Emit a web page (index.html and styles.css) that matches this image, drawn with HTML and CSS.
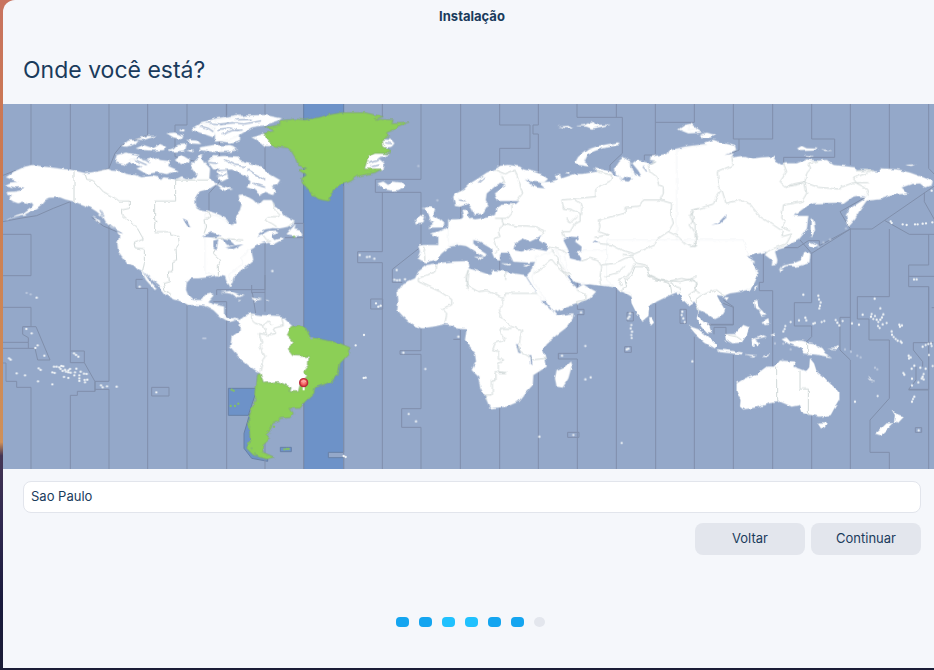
FILE: index.html
```html
<!DOCTYPE html>
<html lang="pt-BR">
<head>
<meta charset="utf-8">
<meta name="viewport" content="width=device-width, initial-scale=1">
<title>Instalação</title>
<link rel="stylesheet" href="styles.css">
</head>
<body>
<main class="window">
  <header class="titlebar">Instalação</header>
  <h1 class="heading">Onde você está?</h1>
  <svg class="map" viewBox="9 312 2814 1095" role="img" aria-label="Mapa de fusos horários">
    <defs>
      <filter id="coast" x="0" y="0" width="2900" height="1420" filterUnits="userSpaceOnUse">
        <feTurbulence type="fractalNoise" baseFrequency="0.05" numOctaves="2" seed="4" result="noise"/>
        <feDisplacementMap in="SourceGraphic" in2="noise" scale="11" xChannelSelector="R" yChannelSelector="G"/>
      </filter>
      <radialGradient id="pin" cx=".5" cy=".4" r=".6">
        <stop offset="0" stop-color="#ffaaa6"/><stop offset=".55" stop-color="#f46562"/><stop offset="1" stop-color="#c42630"/>
      </radialGradient>
    </defs>
    <rect class="sea" x="0" y="300" width="2830" height="1110"/>

    <!-- selected zone -->
    <g class="zone">
      <path d="M911,300H1031V1357H985V1373H1031V1420H911Z"/>
      <path d="M685,1165H772L745,1245V1246H685Z"/>
      <path d="M841,1342h33v13h-33z"/>
      <path d="M750,1240L732,1300V1345L755,1375L803,1384V1377L760,1350Z"/>
    </g>

    <!-- zone limits at sea -->
    <g class="limits">
      <g transform="translate(0 300)">
        <path d="M93,0V196M211,0V207M327,0V205L290,216M327,205L345,160L365,135L443,105V0M561,0V75H525V170L590,185L627,218V240M658,50V245L627,280V330M680,0V45M9,226L45,212M9,365L60,355L110,347L160,325L211,305V753H253V788L285,845V874H232V886H211V1120M9,403H93V527H9M327,365V844H285M327,868V1120M443,565V1120M561,610V1120M680,650V1120M408,538V565H443M408,538H428M275,352L310,378L350,395"/>
        <path d="M9,622H93V680M9,727H85V745M9,745H105L113,780H150L108,680H68V703L85,713V727M9,789H18V844H50V862H93V1120M211,753V788H253M285,868H327M455,862h52v26h-52zM285,844V874"/>
      </g>
      <g transform="translate(675 300)">
        <path d="M4,0V50M120,0V80M120,120V210M120,430V635M236,370V1120M356,258V1120M472,0V50M588,0V238H451V277H588V435M472,277V455H398V488H472V1120M582,445L502,508V547H532M205,370H236M180,413H236M120,860V1120"/>
      </g>
      <g transform="translate(1365 300)">
        <path d="M17,0V355M134,0V75H225V145H134V200M250,0V75H234V102H250V225M366,0V52H502V160L465,195V215M484,0V52M601,0V165H568V180M601,67H718V0M134,470V512"/>
      </g>
      <g transform="translate(2070 300)">
        <path d="M130,0V117H248V0M147,117V150L100,170M365,0V117H434V172H281V192M481,0V195M598,0V208M716,0V205L745,235M745,250L546,387H481L450,335L530,290M481,387L365,460V608H313V678H365V710L350,725M365,460L330,420M270,443H323L355,422H388V437L481,387V750M598,387V590H502V657H537V720H598V895L540,960V1057H598V1120M585,362L658,403H745M703,278V305L745,380M716,403V495H656V560H716V870H656M656,529H745M220,460V547H208V572H248V1120M716,560V1120M130,620V675H36M130,620L100,600M481,652H450V750L481,780V1120M365,900V1120M130,765V1120M725,623H745"/>
      </g>
      <g transform="translate(1170 750)">
        <path d="M93,235V302H30V313H93V476H35V532H93V690M211,240V690M190,268H212M329,472V690M445,365V690M562,95V178H582V194H562V310H505V327H562V690M533,547h34v15h-34zM679,115V690M711,187h19v26h-19zM704,290h20v17h-20z"/>
      </g>
      <g transform="translate(1860 720)">
        <path d="M107,190V690M223,290V690M180,208h19v42h-19zM282,283V262H318V290M240,253H340V202L310,190M886,563h19v14h-19zM880,308H940M880,308V330L908,365V380M888,380V420L866,448H926"/>
      </g>
      <g transform="translate(600 855)">
        <path d="M50,30V14H195V-30M195,22H157L167,85M80,50H40M80,50V110M512,42h36v30h-36zM155,0V25"/>
      </g>
    </g>

    <g filter="url(#coast)">
      <g class="land">
        <!-- North America, west -->
        <g transform="translate(0 300)">
          <path d="M18,232L42,215L75,200L100,195L130,200L175,205L222,212L255,219L290,215L325,207L335,212L365,215L380,222L405,225L425,232L455,228L475,232L483,240L490,232L515,235L530,240L545,232L558,238L575,238L590,225L570,198L605,163L605,178L630,205L628,235L640,245L650,252L630,265L600,273L590,285L583,300L585,318L600,328L622,332L640,338L660,345L680,358L690,375L705,380L740,390L760,480L700,530L697,553L690,553L680,530L665,522L640,528L620,532L595,535L570,535L560,545L558,570L565,587L580,600L605,600L615,585L637,580L640,590L625,607L640,613L672,620V645L680,653L695,655L705,662L690,665L678,660L660,650L640,630L615,617L590,615L565,615L545,605L520,598L500,585L475,555L445,530L428,512L445,538L470,565L465,570L438,540L425,515L415,510L400,495L380,490L370,475L355,455L352,430L358,410L352,395L368,402L360,392L335,383L320,370L310,352L290,335L270,322L250,315L222,305L195,298L180,292L150,293L135,300L125,312L110,325L75,343L45,350L20,360L50,345L75,338L92,325L100,315L95,308L85,312L70,305L55,310L40,305L30,298L35,288L22,282L20,276L45,275L60,272L70,262L45,262L15,255L30,248L55,245L35,238Z"/>
          <path d="M345,187L350,165L378,158L418,165L400,180L380,195ZM388,178L420,172L430,182L470,172L480,180L508,183L505,198L535,212L500,222L470,217L440,222L410,205L425,200L395,190ZM365,138L385,122L415,120L405,132L380,140ZM410,118L440,108L468,108L430,120ZM408,145L430,135L460,145L480,132L497,140L495,150L460,152L430,150ZM500,100L525,98L550,108L545,118L520,112ZM530,135L560,133L555,152L520,155L505,150L520,145ZM560,120L590,122L600,132L570,130ZM572,88L600,70L630,72L650,95L640,112L600,98ZM602,68L650,55L720,44V120L690,128L650,122L690,112L650,105L665,90L640,85ZM600,142L640,135L700,138L710,152L650,157L600,150ZM525,180L545,165L570,180L565,190L540,192ZM622,185L640,168L665,172L655,195L690,200L700,208L640,208ZM650,215L680,212L685,235L665,245L655,235ZM650,252L680,262L698,268L670,272ZM560,152L580,148L580,156ZM540,88L550,88L550,94L540,94ZM278,350L300,362L300,370Z"/>
        </g>
        <!-- Canada east -->
        <g transform="translate(675 300)">
          <path d="M-60,340L0,358L20,375L35,370L30,350L45,330L50,310L40,300L38,285L55,283L85,300L100,315L115,300L140,300L150,318L160,325L170,335L180,348L208,362L205,375L190,380L165,385L140,384L120,388L105,398L95,408L112,402L130,393L155,392L160,397L140,402L138,412L150,420L170,415L172,420L150,432L135,432L130,425L115,428L95,435L85,445L70,450L60,465L50,475L55,490L35,505L18,520L12,530L20,550L15,558L5,545L0,530L-60,520Z"/>
          <path d="M185,402L200,385L212,372L208,388L225,392L232,405L215,408ZM-30,60L0,55L60,47L120,45L170,55L160,62L120,75L80,82L60,95L35,110L10,120L-30,125ZM-45,185L-30,170L0,168L40,170L45,180L75,190L110,200L130,220L165,240L155,255L140,258L150,270L145,285L120,275L105,285L85,268L65,262L80,245L60,225L35,215L20,208L-20,210ZM-10,138L15,135L35,145L20,155L-10,155ZM117,100L147,138L120,138L108,128L80,112L105,105ZM415,210L422,172L445,157L490,163L460,175L478,190L475,208ZM470,118L500,120L508,130L500,140L472,144ZM458,250L475,245L490,255L500,245L530,248L540,258L520,270L500,272L480,268L470,262ZM600,325L615,318L630,330L625,345L640,355L658,370L655,382L610,383L625,370L612,360L615,350ZM570,360L585,345L600,350L595,370L572,373ZM740,350L690,362L670,380L655,388L640,395L615,400L640,410L640,435L600,435L580,437L585,455L578,475L590,482L605,488L635,478L650,460L675,440L705,435L740,440Z"/>
        </g>
        <!-- Europe and west Asia -->
        <g transform="translate(1365 300)">
          <path d="M0,318L-5,290L0,282L25,270L45,250L70,235L95,218L125,205L135,198L160,195L195,200L205,208L235,215L265,225L278,238L265,248L230,245L210,238L225,252L240,262L270,265L250,247L285,245L305,240L300,225L315,222L320,235L360,222L385,222L425,215L415,205L440,208L468,215L475,225L490,230L500,242L520,245L535,235L520,230L530,200L540,225L560,230L550,212L532,190L545,180L565,185L585,190L600,182L585,180L588,170L635,162L640,152L690,140L760,130V575L480,562L440,556L405,552L380,555L360,548L345,530L333,525L335,540L355,570V600H250L240,570L215,530L225,518L237,485L215,488L175,485L165,465L162,458L140,458L135,465L135,482L120,478L112,460L108,445L90,435L75,425L55,420L55,430L75,450L95,463L85,470L75,465L60,455L45,445L30,435L0,432L-20,438V358L20,358L25,350L20,330L40,330L38,352L60,358L100,352L120,345L125,325L140,315L180,312L190,303L130,303L120,280L155,255L140,248L125,255L95,280L92,300L100,315L85,340L60,345L50,325L40,310L15,320Z"/>
          <path d="M482,222L480,200L490,185L505,172L515,178L528,185L530,225L500,240ZM360,188L370,170L400,148L430,138L490,127L493,135L440,145L400,160L388,185L405,200L370,195ZM312,80L340,78L355,86L330,84ZM365,78L390,75L410,64L420,75L465,74L440,80L410,86L395,80ZM670,88L690,75L710,72L722,85L740,98L700,100ZM140,490L168,492L160,496ZM205,498L222,492L215,500ZM58,470L85,472L80,480ZM330,218L345,215L345,222Z"/>
        </g>
        <!-- east Asia -->
        <g transform="translate(2070 300)">
          <path d="M-40,150L0,140L50,135L45,128L70,120L95,128L135,138L138,150L105,165L130,160L125,172L165,168L190,175L215,172L250,170L258,185L275,195L285,190L320,190L350,178L385,182L410,180L430,195L495,202L500,212L525,210L565,215L570,205L620,208L660,218L700,232L728,243L725,255L705,262L690,250L665,252L635,262L652,280L610,285L570,298L530,302L510,330L495,355L475,378L468,345L480,325L520,300L530,290L500,288L490,290L460,312L440,308L370,310L345,322L310,348L355,348L350,390L325,420L285,440L265,445L255,455L262,480L260,495L242,497L245,480L225,465L230,455L200,462L170,470L195,485L185,490L205,515L195,545L180,570L-40,580Z"/>
          <path d="M0,72L20,85L-5,90ZM30,105L50,98L75,105L60,113L40,113ZM322,145L335,138L350,145L382,146L370,152L330,153ZM395,148L425,152L405,153ZM345,165L370,168L360,171ZM648,195L675,193L665,198ZM358,440L360,425L385,435L370,445ZM345,455L358,460L355,490L320,500L290,498L268,508L275,498L310,490L335,480ZM268,508L280,508L272,518ZM362,355L370,360L375,390L365,412L362,400Z"/>
        </g>
        <!-- Africa, Arabia, Iran -->
        <g transform="translate(1170 750)">
          <path d="M110,45L140,40L190,35L235,33L238,50L235,55L270,65L300,75L310,60L345,65L370,70L405,75L415,92L430,115L440,130L455,150L475,170L490,185L500,198L550,190L548,205L530,232L500,255L470,280L458,300L465,320L470,350L430,375L428,405L405,430L385,455L350,470L300,475L290,450L270,410L265,380L245,360L258,335L255,310L240,290L225,270L230,238L195,235L190,225L165,222L130,230L95,235L65,222L40,200L22,180L25,150L22,125L40,100L75,85L85,65Z"/>
          <path d="M425,82L430,95L450,125L470,155L492,185L560,162L600,145L618,125L590,110L580,103L560,115L548,105L530,80L525,60L500,0L440,20L435,45L430,70ZM535,75L555,98L585,100L620,105L660,105L690,115L705,130L740,150V0H520ZM495,385L500,360L525,350L540,335L545,350L535,385L518,413L500,410Z"/>
        </g>
        <!-- south Asia and Oceania -->
        <g transform="translate(1860 720)">
          <path d="M-40,120L-10,145L0,155L30,158L35,190L50,220L68,242L85,228L88,200L110,185L150,165L175,155L190,180L205,195L220,185L235,205L235,230L250,245L268,258L275,280L262,280L245,262L230,235L238,210L262,222L285,237L310,225L315,210L300,185L290,165L310,168L330,160L365,155L395,140L412,110L405,85L395,60L380,50L385,42L370,0H-40Z"/>
          <path d="M85,235L95,235L102,248L93,256L86,250ZM312,172L326,172L320,181ZM402,152L412,138L410,152ZM402,185L412,180L415,200L425,212L405,205ZM425,245L445,235L448,252L435,255ZM418,215L428,210L440,225L425,230ZM315,283L345,282L370,255L388,262L380,285L365,308L335,310L318,300ZM207,258L235,268L265,292L290,315L285,325L255,308L225,280ZM290,328L330,332L368,338L365,343L300,336ZM395,298L430,286L440,290L405,298L420,310L415,322L405,308L403,322L397,318ZM375,343L410,346L400,350ZM428,350L450,343L440,351ZM485,298L500,293L510,305L540,302L580,310L605,325L615,340L635,352L600,345L570,342L550,340L545,325L525,318L495,305ZM620,325L645,323L655,316L650,328ZM350,430L375,415L410,402L440,380L465,380L480,362L525,365L520,380L560,395L568,385L570,355L582,370L590,395L615,415L635,435L658,455L658,480L640,510L632,525L600,530L575,525L550,520L540,495L515,500L480,485L450,490L410,502L370,508L360,500L362,480L350,455ZM592,548L620,547L615,562L603,565ZM815,508L830,522L852,530L835,548L822,545L825,525ZM765,584L800,550L820,550L800,570L780,588ZM742,412L765,424L752,420ZM452,285L465,280L460,290Z"/>
        </g>
        <!-- South America and Caribbean -->
        <g transform="translate(600 855)">
          <path d="M70,95L90,103L105,98L118,105L135,92L150,85L180,90L245,93L275,122L300,150L278,170L300,200L335,215V240L318,260L335,275L310,300L295,325L270,320L275,308L235,290L190,295L180,265L150,245L120,220L90,185L95,155L118,140L120,118L105,103L90,110ZM63,22L90,18L130,33L110,36L95,26ZM152,38L185,43L165,48ZM112,45L124,46L115,49ZM198,45L208,46L200,48Z"/>
        </g>
      </g>

      <g class="chosen">
        <path transform="translate(675 300)" d="M117,100L150,92L120,82L165,75L165,62L210,57L240,60L280,52L310,45L350,38L420,38L475,50L450,57L505,60L500,68L552,66L515,80L505,90L485,98L490,110L472,120L475,140L495,150L492,160L450,160L430,170L418,207L470,207L450,218L400,228L375,245L335,258L325,275L315,285L310,303L280,297L262,283L245,262L232,250L230,235L245,225L220,210L245,205L218,195L212,175L200,155L185,143L143,138Z"/>
        <path transform="translate(600 855)" d="M272,125L300,120L318,130L330,155L375,165L420,175L450,188L448,205L420,235L415,265L395,290L345,308L342,325L315,350L300,370L270,370L280,385L270,398L240,400L235,410L218,415L212,435L198,450L208,462L190,480L185,500L222,516L200,522L160,510L140,490L150,460L145,400L165,345L172,270L180,265L190,295L235,290L272,307L270,320L295,320L300,300L322,275L308,262L325,240L327,215L278,212L265,195L278,170L262,152Z"/>
      </g>

      <!-- inland waters -->
      <g class="water">
        <path transform="translate(0 300)" d="M548,355L562,362L572,382L562,378ZM605,410L635,396L665,408L640,413ZM640,422L655,418L650,448L640,442ZM662,416L690,422L705,435L682,438ZM675,445L705,436L730,433L700,447Z"/>
        <path transform="translate(1365 300)" d="M175,450L180,430L205,415L225,425L260,408L250,420L280,440L275,453L230,445L200,455ZM325,420L345,410L375,412L360,425L380,440L378,455L360,458L378,470V483L345,475L340,450ZM413,428L420,420L430,430ZM768,375L790,368L815,342L812,355L795,370Z"/>
        <path transform="translate(1170 750)" d="M378,282L383,282L393,310L385,308ZM418,318H424L427,346L420,342Z"/>
        <path transform="translate(600 855)" d="M325,158L345,155L335,164Z"/>
      </g>
      <!-- channels and fjords -->
      <g class="channels">
        <path transform="translate(0 300)" d="M600,78L625,85L640,95M620,68L660,72L700,68M655,88L690,84L715,92M405,180L440,195M430,176L450,188M610,186L650,190M648,230L680,222M300,330L312,350M330,375L362,398"/>
        <path transform="translate(675 300)" d="M-15,75L20,68L60,72L110,62M-10,105L20,92L50,90M30,60L80,58M0,180L30,195L60,200M70,210L95,225L120,240M85,250L120,262M430,190L455,182L470,170M440,200L460,195M480,128L500,132"/>
        <path transform="translate(1365 300)" d="M565,200L575,215M90,230L70,248M12,300L30,302"/>
      </g>

      <!-- zone limits on land -->
      <g class="borders">
        <path transform="translate(0 300)" d="M222,212V305M255,219L260,238L280,242L310,275L350,297L357,303H388V325L365,330V342L390,365L412,385L430,417L402,430L405,443L433,447V490L428,515M627,240H527V303H464V360L472,365L464,370V395H512V405L535,410L538,430L528,445L530,480L518,485V515H505L508,545L490,550L495,570L512,585M622,332L630,350L615,360L620,380L612,400M645,445L640,460L662,480L655,495V525M640,413L730,420"/>
        <path transform="translate(675 300)" d="M145,308L150,330L165,345L160,350H125L120,360L140,370L155,380M188,380L210,362M112,402L125,420L135,420M600,440L597,455L600,480"/>
        <path transform="translate(1365 300)" d="M120,210L150,222L180,210L190,240L203,280L185,303M140,225L150,250M170,312L172,335L155,355H120M140,355L145,370L185,378H215L240,380L270,392L260,408M145,370L130,395L135,410L118,415L128,450L118,460M425,215L470,225L468,240L422,265V290L370,295L320,300L325,325L345,328L375,340V365L360,370L345,395L322,395L330,415M360,298L380,312V345M335,355L345,370L365,350M600,182L580,195L585,215L605,230L612,255L625,260V280L615,300H565L555,318L510,322V340L430,360L435,380L430,395L460,405L418,412M615,300L650,310L648,340L655,370L640,395L610,415L600,435L565,450L530,465L500,463M430,430L470,435L500,450L535,460M730,325L710,330L715,360L705,375L725,405L720,440L690,430L670,410L640,395M280,440L320,450L335,460M290,450L310,475L305,495M237,520L265,500L290,478L315,510L350,525M380,483L405,475L430,483L440,500L435,530L440,555M440,495L480,490L510,475L535,470M530,470L545,490L575,495L580,520M540,490L530,510L515,530L490,540L500,560M445,530L490,518L510,495M580,525L610,540L640,545L680,535L700,540L725,530M40,510L32,530L40,570"/>
        <path transform="translate(2070 300)" d="M125,172L130,195L82,215L85,260L95,268L108,310L150,300L180,312L210,350L250,375L280,395L275,410L305,402L290,430L240,450L225,462M95,268L80,290L70,312L45,320L15,330L0,350L15,375V405L20,438L0,440M281,192L290,215L270,245L288,262L310,252L345,245L350,220L362,205L355,190L385,182M288,262L345,248L385,262L440,267L490,248H535M345,250L350,280L335,305L280,315L275,355L285,365L275,380L300,390M500,212H550L515,225L490,235L500,250L530,265L535,290M0,540L20,545L15,570L30,580"/>
        <path transform="translate(1170 750)" d="M140,42L138,65L85,85V95L150,125L185,148V165L155,175L170,190L165,220M235,60L228,105L265,125L290,122L340,142V165L325,180L335,205L365,230L395,240L390,270L385,300L420,322L425,330L467,325M347,65V90M440,130H345V140M365,235H330L335,255L345,270L315,280L308,300L325,305V328H340V335L325,340V365L348,368H315V392H307V435H285L290,450M500,25L530,80M562,165L560,155L585,150V130L560,120"/>
        <path transform="translate(1860 720)" d="M0,155L20,140L15,120L35,105L45,80H75L88,105L125,122H155L180,125L215,115L232,130L228,150L205,165L215,185M88,105L95,115L150,130L155,160M155,125L165,140L185,145L180,158M245,165L290,150L310,165M245,165L225,180L235,210M470,380V487M540,392V447H565V525M563,305V342M325,285L350,290L365,300"/>
        <path transform="translate(600 855)" d="M155,85V105L165,115L190,120L200,150L178,145L185,175L180,185L195,215L188,225L180,260M205,150L230,145L222,130L250,122L245,95M190,120L205,108L215,120"/>
      </g>
    </g>

    <!-- small islands -->
    <g class="isles">
      <path transform="translate(0 855)" d="M110,38h0M79,132h0M95,145h0M113,181h0M106,189h0M133,212h0M27,220h0M32,224h0M222,205h0M228,210h0M235,215h0M50,265h0M75,271h0M116,250h0M122,255h0M114,289h0M157,298h0M157,262h0M164,264h0M162,245h0M170,245h0M178,247h0M184,243h0M190,244h0M182,252h0M188,258h0M195,254h0M198,260h0M205,256h0M210,252h0M212,263h0M205,262h0M192,276h0M205,279h0M223,271h0M225,262h0M229,251h0M242,260h0M252,266h0M260,267h0M238,271h0M238,280h0M238,288h0M254,285h0M262,284h0M255,292h0M303,301h0M308,307h0M321,304h0M350,305h0M469,322h0M419,5h0"/>
      <path transform="translate(675 300)" d="M142,513h0M404,465h0M426,471h0M434,470h0M448,476h0M515,510h0M508,539h0M516,541h0M524,540h0M540,538h0"/>
      <path transform="translate(600 855)" d="M492,150h0M467,181h0M491,279h0M497,278h0M528,55h0M535,65h0M542,62h0M431,513h0M437,516h0M92,2h0"/>
      <path transform="translate(1170 750)" d="M40,308h0M106,357h0M56,492h0M78,514h0M205,260h0M448,560h0M550,555h0M516,317h0M586,288h0M586,388h0M602,382h0M573,187h0M695,579h0M720,190h0M718,200h0M714,205h0M724,225h0M722,235h0M726,245h0M724,255h0M725,264h0M715,296h0M710,298h0"/>
      <path transform="translate(1860 720)" d="M187,215h0M185,225h0M190,235h0M194,246h0M217,364h0M550,164h0M595,167h0M597,178h0M602,187h0M600,197h0M598,205h0M512,246h0M537,241h0M556,233h0M559,241h0M496,258h0M494,267h0M490,274h0M580,251h0M585,249h0M605,246h0M613,243h0M647,240h0M652,248h0M658,256h0M668,243h0M696,250h0M717,254h0M764,176h0M781,205h0M728,224h0M755,222h0M753,230h0M765,228h0M760,237h0M770,239h0M790,223h0M786,232h0M781,239h0M775,246h0M788,253h0M800,249h0M774,258h0M779,264h0M838,254h0M846,256h0M840,260h0M815,274h0M816,284h0M821,291h0M827,297h0M833,302h0M842,304h0M845,308h0M908,320h0M917,315h0M925,312h0M933,310h0M935,318h0M927,345h0M866,347h0M872,352h0M867,355h0M938,378h0M883,377h0M875,386h0M901,383h0M917,386h0M850,399h0M853,404h0M911,402h0M908,410h0M905,415h0M911,418h0M876,416h0M895,427h0M876,436h0M883,470h0M879,477h0M876,485h0M705,485h0M773,468h0M896,571h0M882,118h0M890,118h0"/>
      <path transform="translate(2070 300)" d="M602,364h0M605,369h0M638,373h0M650,375h0M675,373h0M683,373h0M698,371h0M708,370h0M727,367h0M725,272h0"/>
    </g>
    <!-- faint islets -->
    <g class="isles isles-faint">
      <path transform="translate(0 855)" d="M610,160h0M616,160h0M92,28h0M80,24h0"/>
      <path transform="translate(675 300)" d="M637,301h0M595,325h0M580,198h0"/>
      <path transform="translate(1860 720)" d="M488,360h0M465,310h0M490,311h0M512,328h0M675,328h0M693,335h0M712,347h0M722,352h0M765,383h0M772,388h0"/>
      <path transform="translate(2070 300)" d="M385,440h0M400,427h0M420,418h0M468,385h0"/>
    </g>
    <path class="isles isles-chosen" transform="translate(600 855)" d="M95,314h0M101,317h0M92,363h0M105,363h0M115,356h0M253,493h0M260,492h0M266,492h0M222,425h0M148,425h0M145,475h0M155,490h0M165,505h0"/>
    <path class="isles isles-chosen" transform="translate(675 300)" d="M207,410h0"/>

    <!-- location pin -->
    <path class="pin-stem" d="M911,1160V1171"/>
    <circle class="pin-head" cx="911" cy="1148" r="12" fill="url(#pin)"/>
    <path class="pin-shine" d="M904,1145Q911,1137 918,1145"/>
  </svg>

  <form class="form">
    <input class="field" type="text" aria-label="Localização" value="Sao Paulo">
    <div class="actions">
      <button class="button" type="button">Voltar</button>
      <button class="button" type="button">Continuar</button>
    </div>
  </form>
  <div class="steps" role="img" aria-label="Progresso">
    <span class="step"></span><span class="step"></span><span class="step step-near"></span><span class="step step-near"></span><span class="step"></span><span class="step"></span><span class="step step-next"></span>
  </div>
</main>
</body>
</html>
```
FILE: styles.css
```css
* { box-sizing: border-box; }

body {
  margin: 0;
  min-height: 100vh;
  padding: 0 0 2px 3px;
  display: flex;
  overflow: hidden;
  background: linear-gradient(#c8735f, #cc7a50 25%, #cf9059 66%, #443554 68%, #302950 78%, #191a3c 90%, #1b1d36);
  color: #1a3b5c;
  font: 13px/20px Inter, "Open Sans", sans-serif;
}

/* the window reaches past the right edge of the screen */
.window {
  flex: 1;
  margin-right: -7px;
  background: #f5f7fb;
  border-radius: 12px 0 0 0;
}

.titlebar {
  padding: 6px 0;
  text-align: center;
  font-weight: 700;
}

.heading {
  margin: 0;
  padding: 22px 20px 18px;
  font-size: 23px;
  line-height: 32px;
  font-weight: 400;
}

.map { display: block; width: 100%; height: auto; }

.sea, .water { fill: #94a8c9; }
.zone { fill: #6d92c8; stroke: #6880a6; stroke-width: 3; }
.limits { fill: none; stroke: #808fab; stroke-width: 3; }
.land { fill: #fff; stroke: #dfe5ea; stroke-width: 1; }
.chosen { fill: #8ccf57; stroke: #7da66b; stroke-width: 2; }
.borders { fill: none; stroke: #d0d8d8; stroke-width: 3; }
.channels { fill: none; stroke: #a9b9d2; stroke-width: 4; }
.isles { fill: none; stroke: #eff3f6; stroke-width: 7; stroke-linecap: round; }
.isles-faint { stroke: #b9c6dc; }
.isles-chosen { stroke: #83bf67; }
.pin-stem { stroke: #fff; stroke-width: 6; }
.pin-head { stroke: #b92c3c; stroke-width: 4; }
.pin-shine { fill: none; stroke: #ffd0cc; stroke-width: 2; }

.form { padding: 12px 20px 0; }

.field {
  display: block;
  width: 100%;
  height: 32px;
  padding: 0 7px 2px;
  border: 1px solid #e2e5ec;
  border-radius: 8px;
  background: #fff;
  color: inherit;
  font: inherit;
}

.actions {
  display: flex;
  justify-content: flex-end;
  gap: 6px;
  margin-top: 10px;
}

.button {
  width: 110px;
  height: 32px;
  padding: 0 0 2px;
  border: 0;
  border-radius: 8px;
  background: #e3e6ed;
  color: inherit;
  font: inherit;
}

.steps {
  display: flex;
  justify-content: center;
  gap: 10px;
  margin-top: 62px;
  padding-right: 4px;
}

.step {
  width: 13px;
  height: 10px;
  border-radius: 4px;
  background: #14a5f0;
}

.step-near { background: #20c1fe; }
.step-next { width: 11px; border-radius: 50%; background: #e3e6ed; }
```
